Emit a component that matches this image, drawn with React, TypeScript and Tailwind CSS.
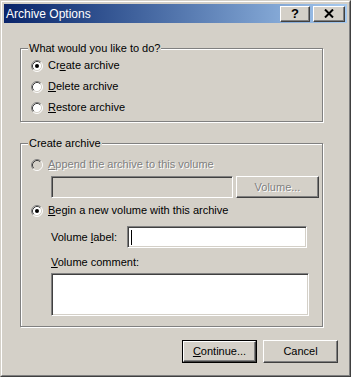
import { ReactNode } from "react";

const raised =
  "border border-t-white border-l-white border-b-[#404040] border-r-[#404040] shadow-[inset_-1px_-1px_0_#808080,inset_1px_1px_0_#d4d0c8]";
const sunken =
  "border border-t-[#808080] border-l-[#808080] border-b-white border-r-white shadow-[inset_1px_1px_0_#404040,inset_-1px_-1px_0_#d4d0c8]";
const disabledText = "text-[#808080] [text-shadow:1px_1px_0_#fff]";

const Radio = ({ checked, disabled }: { checked?: boolean; disabled?: boolean }) => (
  <svg width="12" height="12" viewBox="0 0 12 12" className="shrink-0">
    <circle cx="6" cy="6" r="5" fill={disabled ? "#d4d0c8" : "#fff"} />
    <path d="M2.11 9.89 A5.5 5.5 0 0 1 9.89 2.11" stroke="#808080" fill="none" />
    <path d="M9.89 2.11 A5.5 5.5 0 0 1 2.11 9.89" stroke="#fff" fill="none" />
    <path d="M2.82 9.18 A4.5 4.5 0 0 1 9.18 2.82" stroke="#404040" fill="none" />
    <path d="M9.18 2.82 A4.5 4.5 0 0 1 2.82 9.18" stroke="#d4d0c8" fill="none" />
    {checked && <circle cx="6" cy="6" r="2" fill={disabled ? "#808080" : "#000"} />}
  </svg>
);

const RadioRow = ({ checked, disabled, children }: { checked?: boolean; disabled?: boolean; children: ReactNode }) => (
  <div className="flex h-[21px] items-center gap-[5px] pl-[10px]">
    <Radio checked={checked} disabled={disabled} />
    <span className={disabled ? disabledText : ""}>{children}</span>
  </div>
);

const GroupBox = ({ label, className, children }: { label: string; className: string; children: ReactNode }) => (
  <div
    className={`relative ml-[16px] w-[303px] border border-[#808080] shadow-[inset_1px_1px_0_#fff,1px_1px_0_#fff] ${className}`}
  >
    <span className="absolute left-[7px] top-[-8px] bg-[#d4d0c8] px-[1px] leading-[14px]">{label}</span>
    {children}
  </div>
);

export default function App() {
  return (
    <div className="h-[377px] w-[351px] border border-t-[#d4d0c8] border-l-[#d4d0c8] border-b-[#404040] border-r-[#404040] bg-[#d4d0c8] font-['Liberation_Sans',Arial,sans-serif] text-[11px] text-black">
      <div className="flex h-full flex-col border border-t-white border-l-white border-b-[#808080] border-r-[#808080] p-[2px]">
        <div className="flex h-[19px] items-center justify-between bg-gradient-to-r from-[#0a246a] to-[#a6caf0] pl-[2px] pr-[2px]">
          <span className="text-[12px] text-white">Archive Options</span>
          <div className="flex gap-[3px]">
            <div className={`flex h-[16px] w-[30px] items-center justify-center bg-[#d4d0c8] ${raised}`}>
              <span className="text-[13px] font-bold leading-none">?</span>
            </div>
            <div className={`flex h-[16px] w-[32px] items-center justify-center bg-[#d4d0c8] ${raised}`}>
              <svg width="10" height="9" viewBox="0 0 10 9">
                <path d="M1 0.5 L9 8.5 M9 0.5 L1 8.5" stroke="#000" strokeWidth="2" />
              </svg>
            </div>
          </div>
        </div>

        <GroupBox label="What would you like to do?" className="mt-[25px] h-[74px] pt-[6px]">
          <RadioRow checked>
            Cr<u>e</u>ate archive
          </RadioRow>
          <RadioRow>
            <u>D</u>elete archive
          </RadioRow>
          <RadioRow>
            <u>R</u>estore archive
          </RadioRow>
        </GroupBox>

        <GroupBox label="Create archive" className="mt-[21px] h-[184px] pt-[10px]">
          <RadioRow disabled>
            <u>A</u>ppend the archive to this volume
          </RadioRow>
          <div className="mt-[1px] flex h-[22px] gap-[3px] pl-[30px]">
            <div className={`h-[22px] w-[182px] bg-[#d4d0c8] ${sunken}`} />
            <div className={`flex h-[22px] w-[83px] items-center justify-center ${raised}`}>
              <span className={disabledText}>Volume...</span>
            </div>
          </div>
          <div className="mt-[2px]">
            <RadioRow checked>
              <u>B</u>egin a new volume with this archive
            </RadioRow>
          </div>
          <div className="mt-[5px] flex h-[22px] items-center pl-[30px]">
            <span className="w-[76px]">
              Volume <u>l</u>abel:
            </span>
            <div className={`flex h-[22px] w-[180px] items-center bg-white pl-[3px] ${sunken}`}>
              <div className="h-[15px] w-px bg-black" />
            </div>
          </div>
          <div className="mt-[7px] h-[14px] pl-[30px] leading-[14px]">
            <u>V</u>olume comment:
          </div>
          <div className="mt-[4px] pl-[30px]">
            <div className={`h-[43px] w-[258px] bg-white ${sunken}`} />
          </div>
        </GroupBox>

        <div className="mt-[13px] flex justify-end gap-[6px] pr-[9px]">
          <div className="h-[23px] w-[75px] border border-black">
            <div className={`flex h-full items-center justify-center ${raised}`}>
              <span>
                <u>C</u>ontinue...
              </span>
            </div>
          </div>
          <div className={`flex h-[23px] w-[75px] items-center justify-center ${raised}`}>Cancel</div>
        </div>
      </div>
    </div>
  );
}
